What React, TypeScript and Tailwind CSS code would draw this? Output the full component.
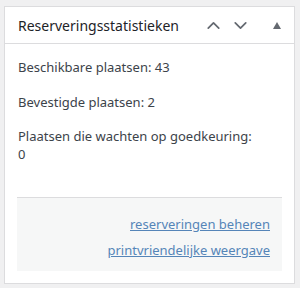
import { ChevronUp, ChevronDown } from "lucide-react";

const App = () => {
  return (
    <main className="min-h-[288px] w-[300px] bg-[#f0f0f1] pt-[6px] pl-[4px] pr-[5px] pb-[6px] font-['Noto_Sans',sans-serif]">
      <div className="border border-[#dcdcde] bg-white">
        <div className="flex h-[37px] items-center justify-between border-b border-[#dcdcde] pl-[13px] pr-[13px]">
          <h2 className="text-[14px] font-normal text-[#1d2327]">Reserveringsstatistieken</h2>
          <div className="flex items-center text-[#646970]">
            <ChevronUp size={21} strokeWidth={2} className="mr-[6px]" />
            <ChevronDown size={21} strokeWidth={2} className="mr-[22px]" />
            <svg width="8" height="7" viewBox="0 0 8 7">
              <polygon points="4,0 8,7 0,7" fill="#646970" />
            </svg>
          </div>
        </div>
        <div className="px-[13px] pt-[14px] text-[13px] leading-[18px] text-[#3c434a]">
          <p className="mb-[17px]">Beschikbare plaatsen: 43</p>
          <p className="mb-[16px]">Bevestigde plaatsen: 2</p>
          <p>
            Plaatsen die wachten op goedkeuring:
            <br />0
          </p>
        </div>
        <div className="mx-[12px] mt-[34px] mb-[12px] border-t border-[#dcdcde] bg-[#f6f7f7] px-[12px] pt-[13px] pb-[8px] text-right text-[13px] leading-[26px]">
          <a href="#" className="block text-[#5585b8] underline">reserveringen beheren</a>
          <a href="#" className="block text-[#5585b8] underline">printvriendelijke weergave</a>
        </div>
      </div>
    </main>
  );
};

export default App;
